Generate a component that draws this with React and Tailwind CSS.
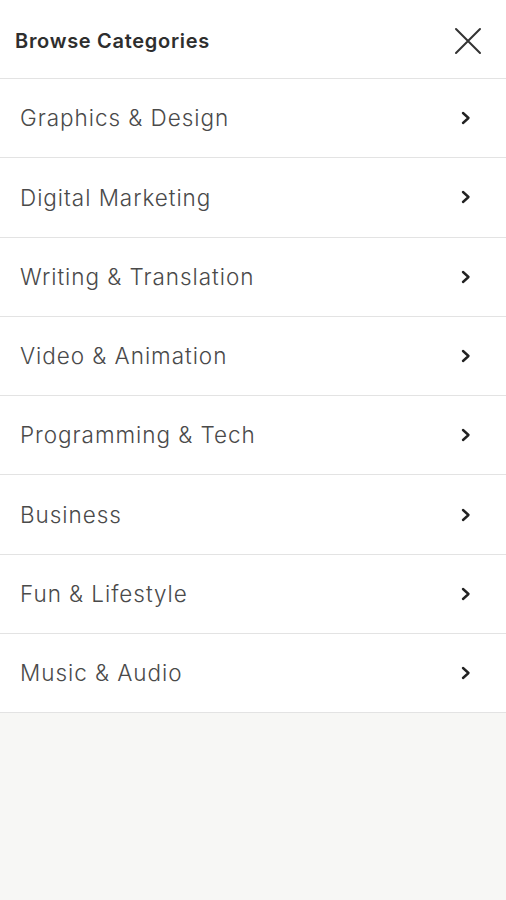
import React from "react";

const categories = [
  "Graphics & Design",
  "Digital Marketing",
  "Writing & Translation",
  "Video & Animation",
  "Programming & Tech",
  "Business",
  "Fun & Lifestyle",
  "Music & Audio",
];

function Chevron() {
  return (
    <svg width="12" height="14" viewBox="0 0 12 14" fill="none" className="text-[#222]">
      <path d="M3 2l5.5 5L3 12" stroke="currentColor" strokeWidth="2.4" strokeLinecap="round" strokeLinejoin="round" />
    </svg>
  );
}

function CloseIcon() {
  return (
    <svg width="28" height="28" viewBox="0 0 28 28" fill="none" className="text-[#333]">
      <path d="M2 2l24 24M26 2L2 26" stroke="currentColor" strokeWidth="2" strokeLinecap="round" />
    </svg>
  );
}

export default function App() {
  return (
    <div className="min-h-[900px] bg-[#f7f7f5] font-['Inter','Liberation_Sans',Arial,sans-serif]">
      <div className="bg-white">
        <div className="flex h-[79px] items-center justify-between border-b border-[#e3e3e3] pl-[15px] pr-[24px] pt-[3px]">
          <h1 className="text-[20px] font-semibold tracking-[0.7px] text-[#2e2e2e]">Browse Categories</h1>
          <CloseIcon />
        </div>
        {categories.map((c) => (
          <div
            key={c}
            className="flex h-[79.3px] items-center justify-between border-b border-[#e3e3e3] pl-[20px] pr-[34px]"
          >
            <span className="text-[22.5px] font-light tracking-[0.95px] text-[#4a4a4a]">{c}</span>
            <Chevron />
          </div>
        ))}
      </div>
    </div>
  );
}
